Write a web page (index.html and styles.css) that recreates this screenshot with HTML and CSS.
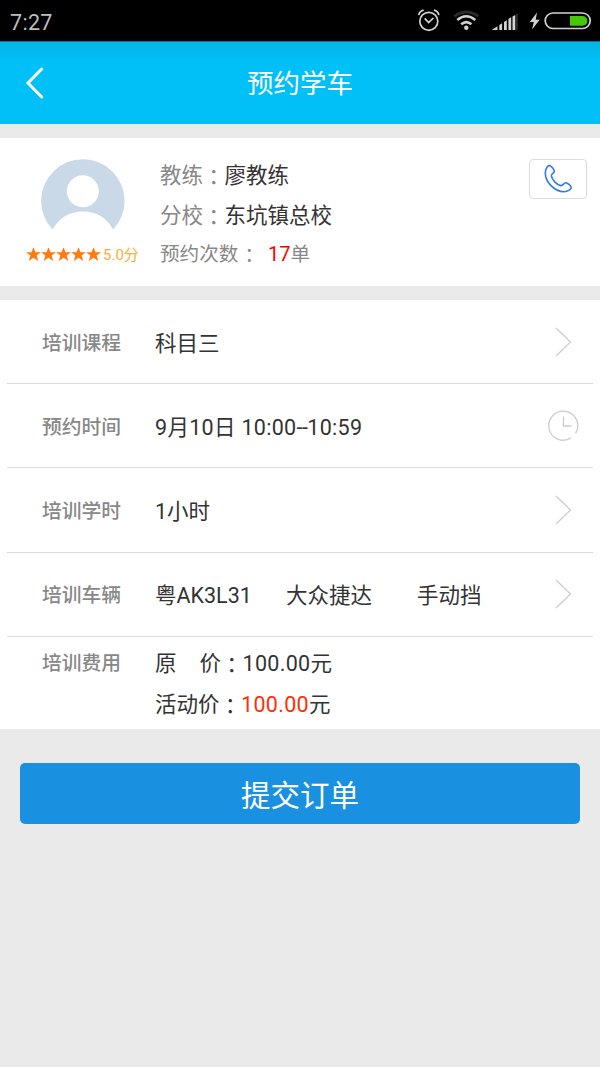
FILE: index.html
```html
<!DOCTYPE html>
<html lang="zh-CN">
<head>
<meta charset="utf-8">
<meta name="viewport" content="width=device-width, initial-scale=1">
<title>预约学车</title>
<link rel="stylesheet" href="styles.css">
</head>
<body>
<div class="status">
  <span class="time">7:27</span>
  <svg class="status-icons" width="180" height="41" viewBox="0 0 180 41" fill="none">
    <g stroke="#d2d2d2" stroke-width="1.7">
      <circle cx="8.8" cy="21.3" r="9"/>
      <path d="M4.700 18.300l4 4.300 4.600-4.600M-1.300 15.200q.8-4 5-5M18.900 15.200q-.8-4-5-5"/>
    </g>
    <path d="M34.300 16.300q12-8.600 24 0" stroke="#2b2b2b" stroke-width="2.700"/>
    <path d="M37.300 20q9-7.500 18 0M41.200 24.200q5.100-4.300 10.200 0" stroke="#d2d2d2" stroke-width="2.600"/>
    <circle cx="46.300" cy="27.700" r="2.200" fill="#d2d2d2"/>
    <path d="M71.700 30l5.800-3.800V30zM79.300 24.900l2.800-1.700V30h-2.800zM84 22l2.800-1.700V30H84zM88.400 19l2.800-1.700V30h-2.800zM92.500 16.600l2.800-1.700V30h-2.800z" fill="#d2d2d2"/>
    <path d="M95.800 14l2-.8V30h-2z" fill="#2b2b2b"/>
    <path d="M117 12.500l-7.200 9.500h4l-1.800 7.500 7.700-9.800h-4z" fill="#d2d2d2"/>
    <rect x="125.200" y="13" width="45" height="15.500" rx="7.750" stroke="#d2d2d2" stroke-width="1.700"/>
    <path d="M150 16h12.500a4.800 4.800 0 0 1 0 9.800H150z" fill="#46c707"/>
  </svg>
</div>
<header class="header">
  <svg class="back" width="22" height="32" viewBox="0 0 22 32"><path d="M17.700 2L4 16l13.700 14" fill="none" stroke="#fff" stroke-width="3" stroke-linecap="round"/></svg>
  <h1 class="title">预约学车</h1>
</header>
<section class="coach">
  <div class="portrait">
    <svg class="avatar" width="84" height="72" viewBox="0 0 84 72">
      <path d="M11.500 70.500A41.700 41.700 0 1 1 72.200 70.500Q62 52.500 42 52.500T11.500 70.500z" fill="#cad9e8"/>
      <circle cx="41.800" cy="32.300" r="16" fill="#fff"/>
    </svg>
    <div class="rating">
      <svg width="75" height="15" viewBox="0 0 75 15" fill="#ff7a10">
        <path id="star" d="M7.500.2l2 5h5.500l-4.400 3.300 1.700 5.500-4.800-3.200L2.700 14l1.700-5.500L0 5.200h5.500z"/>
        <use href="#star" x="15"/><use href="#star" x="30"/><use href="#star" x="45"/><use href="#star" x="60"/>
      </svg>
      <span class="score">5.0分</span>
    </div>
  </div>
  <div class="details">
    <p class="line">教练<span class="colon" lang="zh-TW">：</span><span class="strong">廖教练</span></p>
    <p class="line">分校<span class="colon" lang="zh-TW">：</span><span class="strong">东坑镇总校</span></p>
    <p class="line count">预约次数<span class="colon" lang="zh-TW">：</span><span class="number">17</span>单</p>
  </div>
  <button class="call" aria-label="电话">
    <svg width="30" height="30" viewBox="0 0 30 30"><path d="M7 1.800C5 .8 2.500 4.500 2.300 8.500C2 18 11.500 27.700 21 27.700C25 27.700 28.600 25 28.200 23.200C27.800 21.600 24.500 19 22.900 18.800C20.800 18.600 20.200 22 17.800 21.600C14 21 9.200 16 8.400 12C8 9.500 11.500 9.500 11.300 7.200C11.100 5.500 8.700 2.400 7 1.800z" fill="none" stroke="#2c7bf0" stroke-width="1.600" stroke-linejoin="round"/></svg>
  </button>
</section>
<main class="form">
  <div class="row"><span class="label">培训课程</span><span class="value">科目三</span>
    <svg class="chevron" width="18" height="30" viewBox="0 0 18 30"><path d="M1 1l14.500 14L1 29"/></svg></div>
  <div class="row"><span class="label">预约时间</span><span class="value date">9月10日 10:00<span class="dashes">--</span>10:59</span>
    <svg class="clock" width="32" height="32" viewBox="0 0 32 32"><path d="M28.600 23.300A14.500 14.500 0 1 0 24.200 27.800M16.500 6.500v9.500h8"/></svg></div>
  <div class="row"><span class="label">培训学时</span><span class="value">1小时</span>
    <svg class="chevron" width="18" height="30" viewBox="0 0 18 30"><path d="M1 1l14.500 14L1 29"/></svg></div>
  <div class="row"><span class="label">培训车辆</span><span class="value car"><span>粤AK3L31</span><span>大众捷达</span><span>手动挡</span></span>
    <svg class="chevron" width="18" height="30" viewBox="0 0 18 30"><path d="M1 1l14.500 14L1 29"/></svg></div>
  <div class="row fee"><span class="label">培训费用</span>
    <div class="value">
      <p class="price"><span class="original">原</span>价<span class="colon" lang="zh-TW">：</span><span class="amount">100.00</span>元</p>
      <p class="price">活动价<span class="colon" lang="zh-TW">：</span><span class="amount sale">100.00</span>元</p>
    </div>
  </div>
</main>
<button class="submit">提交订单</button>
</body>
</html>
```

FILE: styles.css
```css
* { box-sizing: border-box; }
body {
  margin: 0;
  min-height: 1067px;
  background: #eaeaea;
  color: #333;
  font-family: Roboto, "Noto Sans CJK SC", sans-serif;
  font-size: 21.5px;
}
p, h1 { margin: 0; }
button { font-family: inherit; padding: 0; }
.status {
  height: 41px;
  display: flex;
  justify-content: space-between;
  background: #000;
}
.time {
  padding-left: 10px;
  color: #bebebe;
  font-size: 21.5px;
  line-height: 45px;
  letter-spacing: .3px;
}
.status-icons { overflow: visible; }
.header {
  height: 83px;
  display: grid;
  grid-template-columns: 60px 1fr 60px;
  align-items: center;
  background: linear-gradient(#02b3e4, #01bff7 18px);
  border-top: 1px solid #04799a;
  color: #fff;
}
.back { margin-left: 24px; }
.title {
  padding-top: 2px;
  text-align: center;
  font-size: 26.5px;
  font-weight: 400;
  line-height: 40px;
}
.coach {
  height: 148px;
  margin-top: 14px;
  padding-right: 13px;
  display: flex;
  align-items: flex-start;
  background: #fff;
}
.portrait {
  width: 160px;
  padding: 21px 0 0 26px;
}
.avatar { display: block; margin-left: 15px; }
.rating {
  height: 22px;
  margin-top: 12px;
  display: flex;
  align-items: center;
  gap: 2px;
}
.score {
  padding-top: 2px;
  color: #fbac3c;
  font-size: 15px;
  line-height: 22px;
  white-space: nowrap;
}
.details { flex: 1; padding-top: 18px; color: #888; }
.line { height: 40px; line-height: 40px; white-space: nowrap; }
.colon {
  font-family: "Noto Sans CJK TC", sans-serif;
  line-height: 0;
  vertical-align: -2px;
}
.strong { color: #333; }
.count { font-size: 19.6px; line-height: 38px; }
.count .colon { margin-left: 1px; }
.number { margin-left: 9px; color: #f00; font-size: 20px; line-height: 0; }
.call {
  width: 58px;
  height: 40px;
  margin-top: 21px;
  display: grid;
  place-items: center;
  background: #fff;
  border: 1.5px solid #ddd;
  border-radius: 4px;
}
.form {
  height: 429px;
  margin-top: 14px;
  padding: 0 7px;
  background: #fff;
}
.row {
  height: 84.2px;
  padding: 0 12px 0 35px;
  display: flex;
  align-items: center;
  border-bottom: 1px solid #dadada;
}
.label {
  width: 113px;
  padding-top: 4px;
  color: #888;
  font-size: 19.8px;
  font-weight: 500;
  line-height: 30px;
}
.value { flex: 1; padding-top: 3px; line-height: 41px; white-space: nowrap; }
.date { letter-spacing: .3px; }
.dashes { letter-spacing: -.5px; }
.car { display: grid; grid-template-columns: 131px 131px 1fr; }
.chevron { margin-right: 8px; }
.chevron path, .clock path { fill: none; stroke: #ccc; stroke-width: 1.3; }
.clock { margin-right: 2px; }
.fee {
  height: 92px;
  padding-top: 5px;
  align-items: flex-start;
  border-bottom: 0;
}
.fee .label { padding-top: 1px; line-height: 42px; }
.fee .value { padding-top: 1px; }
.price { height: 41px; }
.amount { letter-spacing: .3px; }
.original { margin-right: 23px; }
.sale { color: #ff2f05; }
.submit {
  display: block;
  width: 560px;
  height: 61px;
  margin: 34px auto 0;
  padding-top: 5px;
  background: #1a90e0;
  border: 0;
  border-radius: 5px;
  color: #fff;
  font-size: 29.5px;
  line-height: 56px;
}
```
